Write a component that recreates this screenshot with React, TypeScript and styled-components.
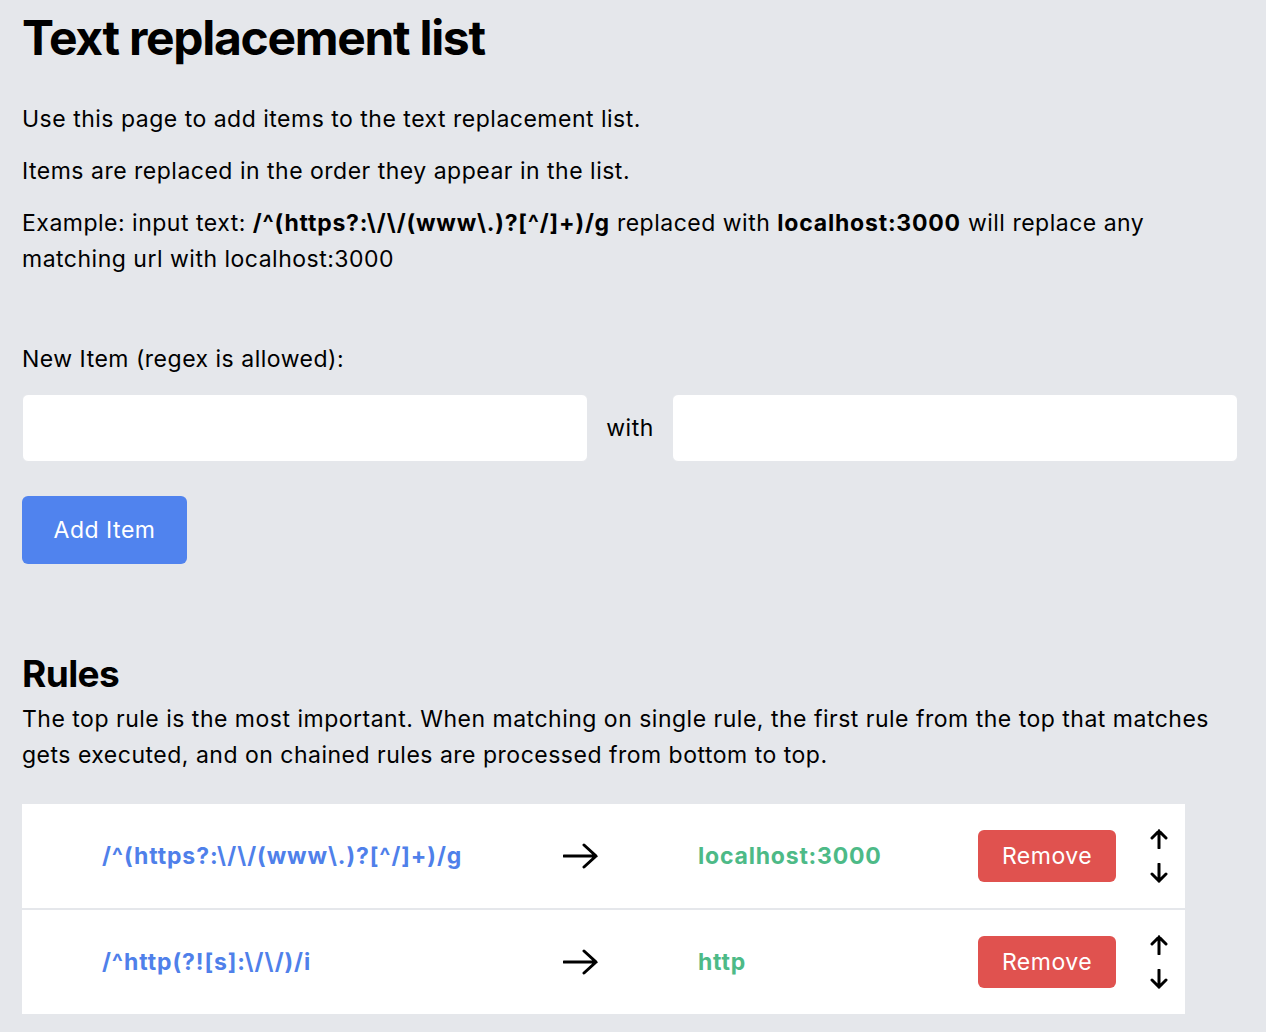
import React from "react";
import styled, { createGlobalStyle } from "styled-components";

const Global = createGlobalStyle`
  html, body { margin: 0; padding: 0; background: #e5e7eb; }
  body { font-family: Inter, "Noto Sans", Roboto, sans-serif; color: #000; }
  * { box-sizing: border-box; }
`;

const Page = styled.main`
  padding: 0 28px 40px 22px;
  min-height: 1032px;
`;

const Title = styled.h1`
  margin: 10px 0 0 0;
  font-size: 48px;
  line-height: 56px;
  font-weight: 700;
  letter-spacing: -1.3px;
`;

const Text = styled.p<{ $top: number }>`
  margin: ${(p) => p.$top}px 0 0 0;
  font-size: 23px;
  line-height: 36px;
  letter-spacing: 0.5px;
`;

const Strong = styled.strong`
  font-weight: 700;
  letter-spacing: 0.8px;
`;

const InputRow = styled.div`
  margin-top: 17px;
  display: grid;
  grid-template-columns: 1fr auto 1fr;
  align-items: center;
`;

const Field = styled.input`
  height: 68px;
  width: 100%;
  border: 1px solid #e5e7eb;
  border-radius: 6px;
  background: #fff;
  padding: 0 16px;
  font-size: 22px;
  font-family: inherit;
  outline: none;
`;

const With = styled.span`
  font-size: 23px;
  letter-spacing: 0.5px;
  text-align: center;
  width: 84px;
`;

const AddButton = styled.button`
  margin-top: 34px;
  width: 165px;
  height: 68px;
  border: none;
  border-radius: 6px;
  background: #5083ee;
  color: #fff;
  font-size: 23px;
  letter-spacing: 0.5px;
  font-family: inherit;
  cursor: pointer;
`;

const Heading = styled.h2`
  margin: 90px 0 0 0;
  font-size: 37px;
  line-height: 40px;
  font-weight: 700;
  letter-spacing: -0.6px;
`;

const Table = styled.div`
  margin-top: 31px;
  width: 1163px;
  background: #fff;
  display: flex;
  flex-direction: column;
`;

const Row = styled.div`
  height: 104px;
  display: grid;
  grid-template-columns: 461px 135px 280px 138px 1fr;
  align-items: center;
  padding-left: 80px;
  & + & {
    border-top: 2px solid #e5e7eb;
    height: 106px;
  }
`;

const Pattern = styled.span`
  color: #4f80ea;
  font-size: 23px;
  font-weight: 700;
  letter-spacing: 0.9px;
`;

const Replacement = styled.span`
  color: #4dba87;
  font-size: 23px;
  font-weight: 700;
  letter-spacing: 0.8px;
`;

const RemoveButton = styled.button`
  width: 138px;
  height: 52px;
  border: none;
  border-radius: 6px;
  background: #e0524f;
  color: #fff;
  font-size: 23px;
  letter-spacing: 0.5px;
  font-family: inherit;
  cursor: pointer;
`;

const Movers = styled.div`
  display: flex;
  flex-direction: column;
  align-items: flex-start;
  gap: 14px;
  padding-left: 32px;
`;

const ArrowRight = () => (
  <svg width="36" height="28" viewBox="0 0 36 28" fill="none">
    <path d="M1 14H33M21 3L33 14L21 25" stroke="#000" strokeWidth="3" strokeLinecap="round" strokeLinejoin="miter" />
  </svg>
);

const ArrowUp = () => (
  <svg width="22" height="20" viewBox="0 0 22 20" fill="none">
    <path d="M11 19V2M4 9L11 2L18 9" stroke="#000" strokeWidth="3" strokeLinecap="round" />
  </svg>
);

const ArrowDown = () => (
  <svg width="22" height="20" viewBox="0 0 22 20" fill="none">
    <path d="M11 1V18M4 11L11 18L18 11" stroke="#000" strokeWidth="3" strokeLinecap="round" />
  </svg>
);

const rules = [
  { pattern: "/^(https?:\\/\\/(www\\.)?[^/]+)/g", replacement: "localhost:3000" },
  { pattern: "/^http(?![s]:\\/\\/)/i", replacement: "http" },
];

export default function App() {
  return (
    <Page>
      <Global />
      <Title>Text replacement list</Title>
      <Text $top={35}>Use this page to add items to the text replacement list.</Text>
      <Text $top={16}>Items are replaced in the order they appear in the list.</Text>
      <Text $top={16}>
        Example: input text: <Strong>{"/^(https?:\\/\\/(www\\.)?[^/]+)/g"}</Strong> replaced with{" "}
        <Strong>localhost:3000</Strong> will replace any matching url with localhost:3000
      </Text>
      <Text $top={64}>New Item (regex is allowed):</Text>
      <InputRow>
        <Field />
        <With>with</With>
        <Field />
      </InputRow>
      <AddButton>Add Item</AddButton>
      <Heading>Rules</Heading>
      <Text $top={7}>
        The top rule is the most important. When matching on single rule, the first rule from the top that matches
        gets executed, and on chained rules are processed from bottom to top.
      </Text>
      <Table>
        {rules.map((r) => (
          <Row key={r.pattern}>
            <Pattern>{r.pattern}</Pattern>
            <ArrowRight />
            <Replacement>{r.replacement}</Replacement>
            <RemoveButton>Remove</RemoveButton>
            <Movers>
              <ArrowUp />
              <ArrowDown />
            </Movers>
          </Row>
        ))}
      </Table>
    </Page>
  );
}
